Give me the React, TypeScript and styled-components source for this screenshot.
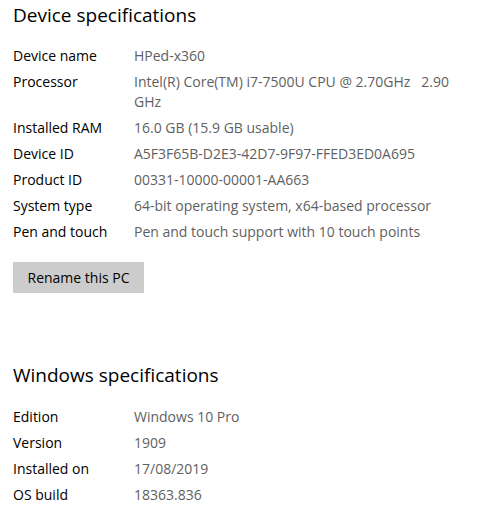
import React from "react";
import styled, { createGlobalStyle } from "styled-components";

const Global = createGlobalStyle`
  html, body { margin: 0; padding: 0; background: #ffffff; }
  body { font-family: "Open Sans", "Noto Sans", "Liberation Sans", sans-serif; }
`;

const Page = styled.div`
  width: 489px;
  height: 509px;
  overflow: hidden;
  padding: 1px 13px 0;
  box-sizing: border-box;
  display: flex;
  flex-direction: column;
`;

const Section = styled.section<{ $top?: number }>`
  display: flex;
  flex-direction: column;
  margin-top: ${(p) => p.$top ?? 0}px;
`;

const Title = styled.h2<{ $gap?: number }>`
  margin: 0 0 ${(p) => p.$gap ?? 17}px 0;
  font-size: 19px;
  line-height: 28px;
  font-weight: 400;
  color: #000;
`;

const Grid = styled.dl`
  margin: 0;
  display: grid;
  grid-template-columns: 121px 340px;
  row-gap: 6px;
  font-size: 14px;
  line-height: 20px;
`;

const Label = styled.dt`
  margin: 0;
  color: #000;
`;

const Value = styled.dd`
  margin: 0;
  color: #5f5f5f;
  white-space: pre-wrap;
`;

const Button = styled.button`
  margin-top: 20px;
  align-self: flex-start;
  width: 131px;
  height: 31px;
  border: none;
  background: #cccccc;
  color: #000;
  font-family: inherit;
  font-size: 14px;
  padding: 0;
`;

const device: [string, React.ReactNode][] = [
  ["Device name", "HPed-x360"],
  ["Processor", <>Intel(R) Core(TM) i7-7500U CPU @ 2.70GHz   2.90<br />GHz</>],
  ["Installed RAM", "16.0 GB (15.9 GB usable)"],
  ["Device ID", "A5F3F65B-D2E3-42D7-9F97-FFED3ED0A695"],
  ["Product ID", "00331-10000-00001-AA663"],
  ["System type", "64-bit operating system, x64-based processor"],
  ["Pen and touch", "Pen and touch support with 10 touch points"],
];

const windows: [string, string][] = [
  ["Edition", "Windows 10 Pro"],
  ["Version", "1909"],
  ["Installed on", "17/08/2019"],
  ["OS build", "18363.836"],
];

export default function App() {
  return (
    <Page>
      <Global />
      <Section>
        <Title>Device specifications</Title>
        <Grid>
          {device.map(([k, v]) => (
            <React.Fragment key={k}>
              <Label>{k}</Label>
              <Value>{v}</Value>
            </React.Fragment>
          ))}
        </Grid>
        <Button>Rename this PC</Button>
      </Section>
      <Section $top={68}>
        <Title $gap={18}>Windows specifications</Title>
        <Grid>
          {windows.map(([k, v]) => (
            <React.Fragment key={k}>
              <Label>{k}</Label>
              <Value>{v}</Value>
            </React.Fragment>
          ))}
        </Grid>
      </Section>
    </Page>
  );
}
